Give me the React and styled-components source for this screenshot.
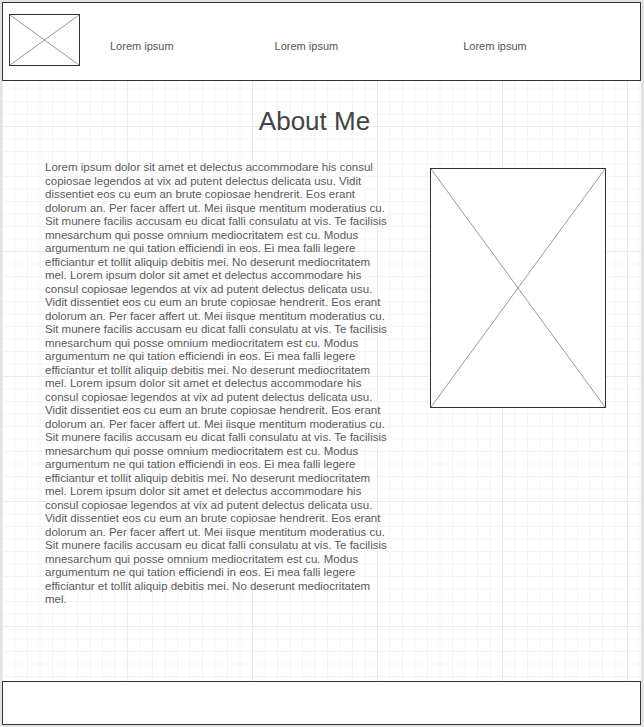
import React from "react";
import styled, { createGlobalStyle } from "styled-components";

const para =
  "Lorem ipsum dolor sit amet et delectus accommodare his consul copiosae legendos at vix ad putent delectus delicata usu. Vidit dissentiet eos cu eum an brute copiosae hendrerit. Eos erant dolorum an. Per facer affert ut. Mei iisque mentitum moderatius cu. Sit munere facilis accusam eu dicat falli consulatu at vis. Te facilisis mnesarchum qui posse omnium mediocritatem est cu. Modus argumentum ne qui tation efficiendi in eos. Ei mea falli legere efficiantur et tollit aliquip debitis mei. No deserunt mediocritatem mel.";

const bio = [para, para, para, para].join(" ");

const navLinks = [
  { id: 1, label: "Lorem ipsum", gap: 30 },
  { id: 2, label: "Lorem ipsum", gap: 101 },
  { id: 3, label: "Lorem ipsum", gap: 125 },
];

const GlobalStyle = createGlobalStyle`
  html, body {
    margin: 0;
    padding: 0;
    background: #e2e2e2;
  }
  body {
    font-family: "Liberation Sans", Arial, sans-serif;
  }
`;

const Frame = styled.div`
  box-sizing: border-box;
  width: 644px;
  height: 727px;
  padding: 2px 3px 2px 2px;
  background: #e2e2e2;
`;

const Canvas = styled.div`
  display: flex;
  flex-direction: column;
  height: 100%;
  background-color: #ffffff;
  background-image: linear-gradient(#ebebeb 1px, transparent 1px),
    linear-gradient(90deg, #ebebeb 1px, transparent 1px),
    linear-gradient(#f4f4f4 1px, transparent 1px),
    linear-gradient(90deg, #f4f4f4 1px, transparent 1px);
  background-size: 125px 125px, 125px 125px, 12.5px 12.5px, 12.5px 12.5px;
  background-position: 0 -1px;
`;

const Header = styled.header`
  box-sizing: border-box;
  height: 79px;
  display: flex;
  align-items: flex-start;
  padding: 11px 0 0 6px;
  background: #fff;
  border: 1px solid #333;
`;

const NavItem = styled.span`
  margin-left: ${(p) => p.$gap}px;
  padding-top: 26px;
  font-size: 11px;
  line-height: 13px;
  color: #555;
  white-space: nowrap;
`;

const Main = styled.main`
  flex: 1;
  display: flex;
  flex-direction: column;
  padding: 25px 35px 0 43px;
`;

const Title = styled.h1`
  margin: 0;
  padding-right: 22px;
  text-align: center;
  font-size: 26px;
  line-height: 30px;
  font-weight: normal;
  color: #444;
`;

const Content = styled.div`
  display: flex;
  align-items: flex-start;
  justify-content: space-between;
  margin-top: 25px;
`;

const Bio = styled.p`
  margin: 0;
  width: 346px;
  font-size: 11.5px;
  line-height: 13.5px;
  color: #5a5a5a;
`;

const Box = styled.div`
  box-sizing: border-box;
  flex: none;
  width: ${(p) => p.$w}px;
  height: ${(p) => p.$h}px;
  margin-top: ${(p) => p.$top || 0}px;
  background: #fff;
  border: 1px solid #333;
  svg {
    display: block;
    width: 100%;
    height: 100%;
  }
`;

const Footer = styled.footer`
  box-sizing: border-box;
  height: 44px;
  background: #fff;
  border: 1px solid #333;
`;

function Placeholder({ w, h, top }) {
  return (
    <Box $w={w} $h={h} $top={top}>
      <svg viewBox="0 0 100 100" preserveAspectRatio="none">
        <line x1="0" y1="0" x2="100" y2="100" stroke="#999" strokeWidth="1" vectorEffect="non-scaling-stroke" />
        <line x1="100" y1="0" x2="0" y2="100" stroke="#999" strokeWidth="1" vectorEffect="non-scaling-stroke" />
      </svg>
    </Box>
  );
}

export default function App() {
  return (
    <>
      <GlobalStyle />
      <Frame>
        <Canvas>
          <Header>
            <Placeholder w={71} h={52} />
            {navLinks.map((link) => (
              <NavItem key={link.id} $gap={link.gap}>
                {link.label}
              </NavItem>
            ))}
          </Header>
          <Main>
            <Title>About Me</Title>
            <Content>
              <Bio>{bio}</Bio>
              <Placeholder w={176} h={240} top={7} />
            </Content>
          </Main>
          <Footer />
        </Canvas>
      </Frame>
    </>
  );
}
